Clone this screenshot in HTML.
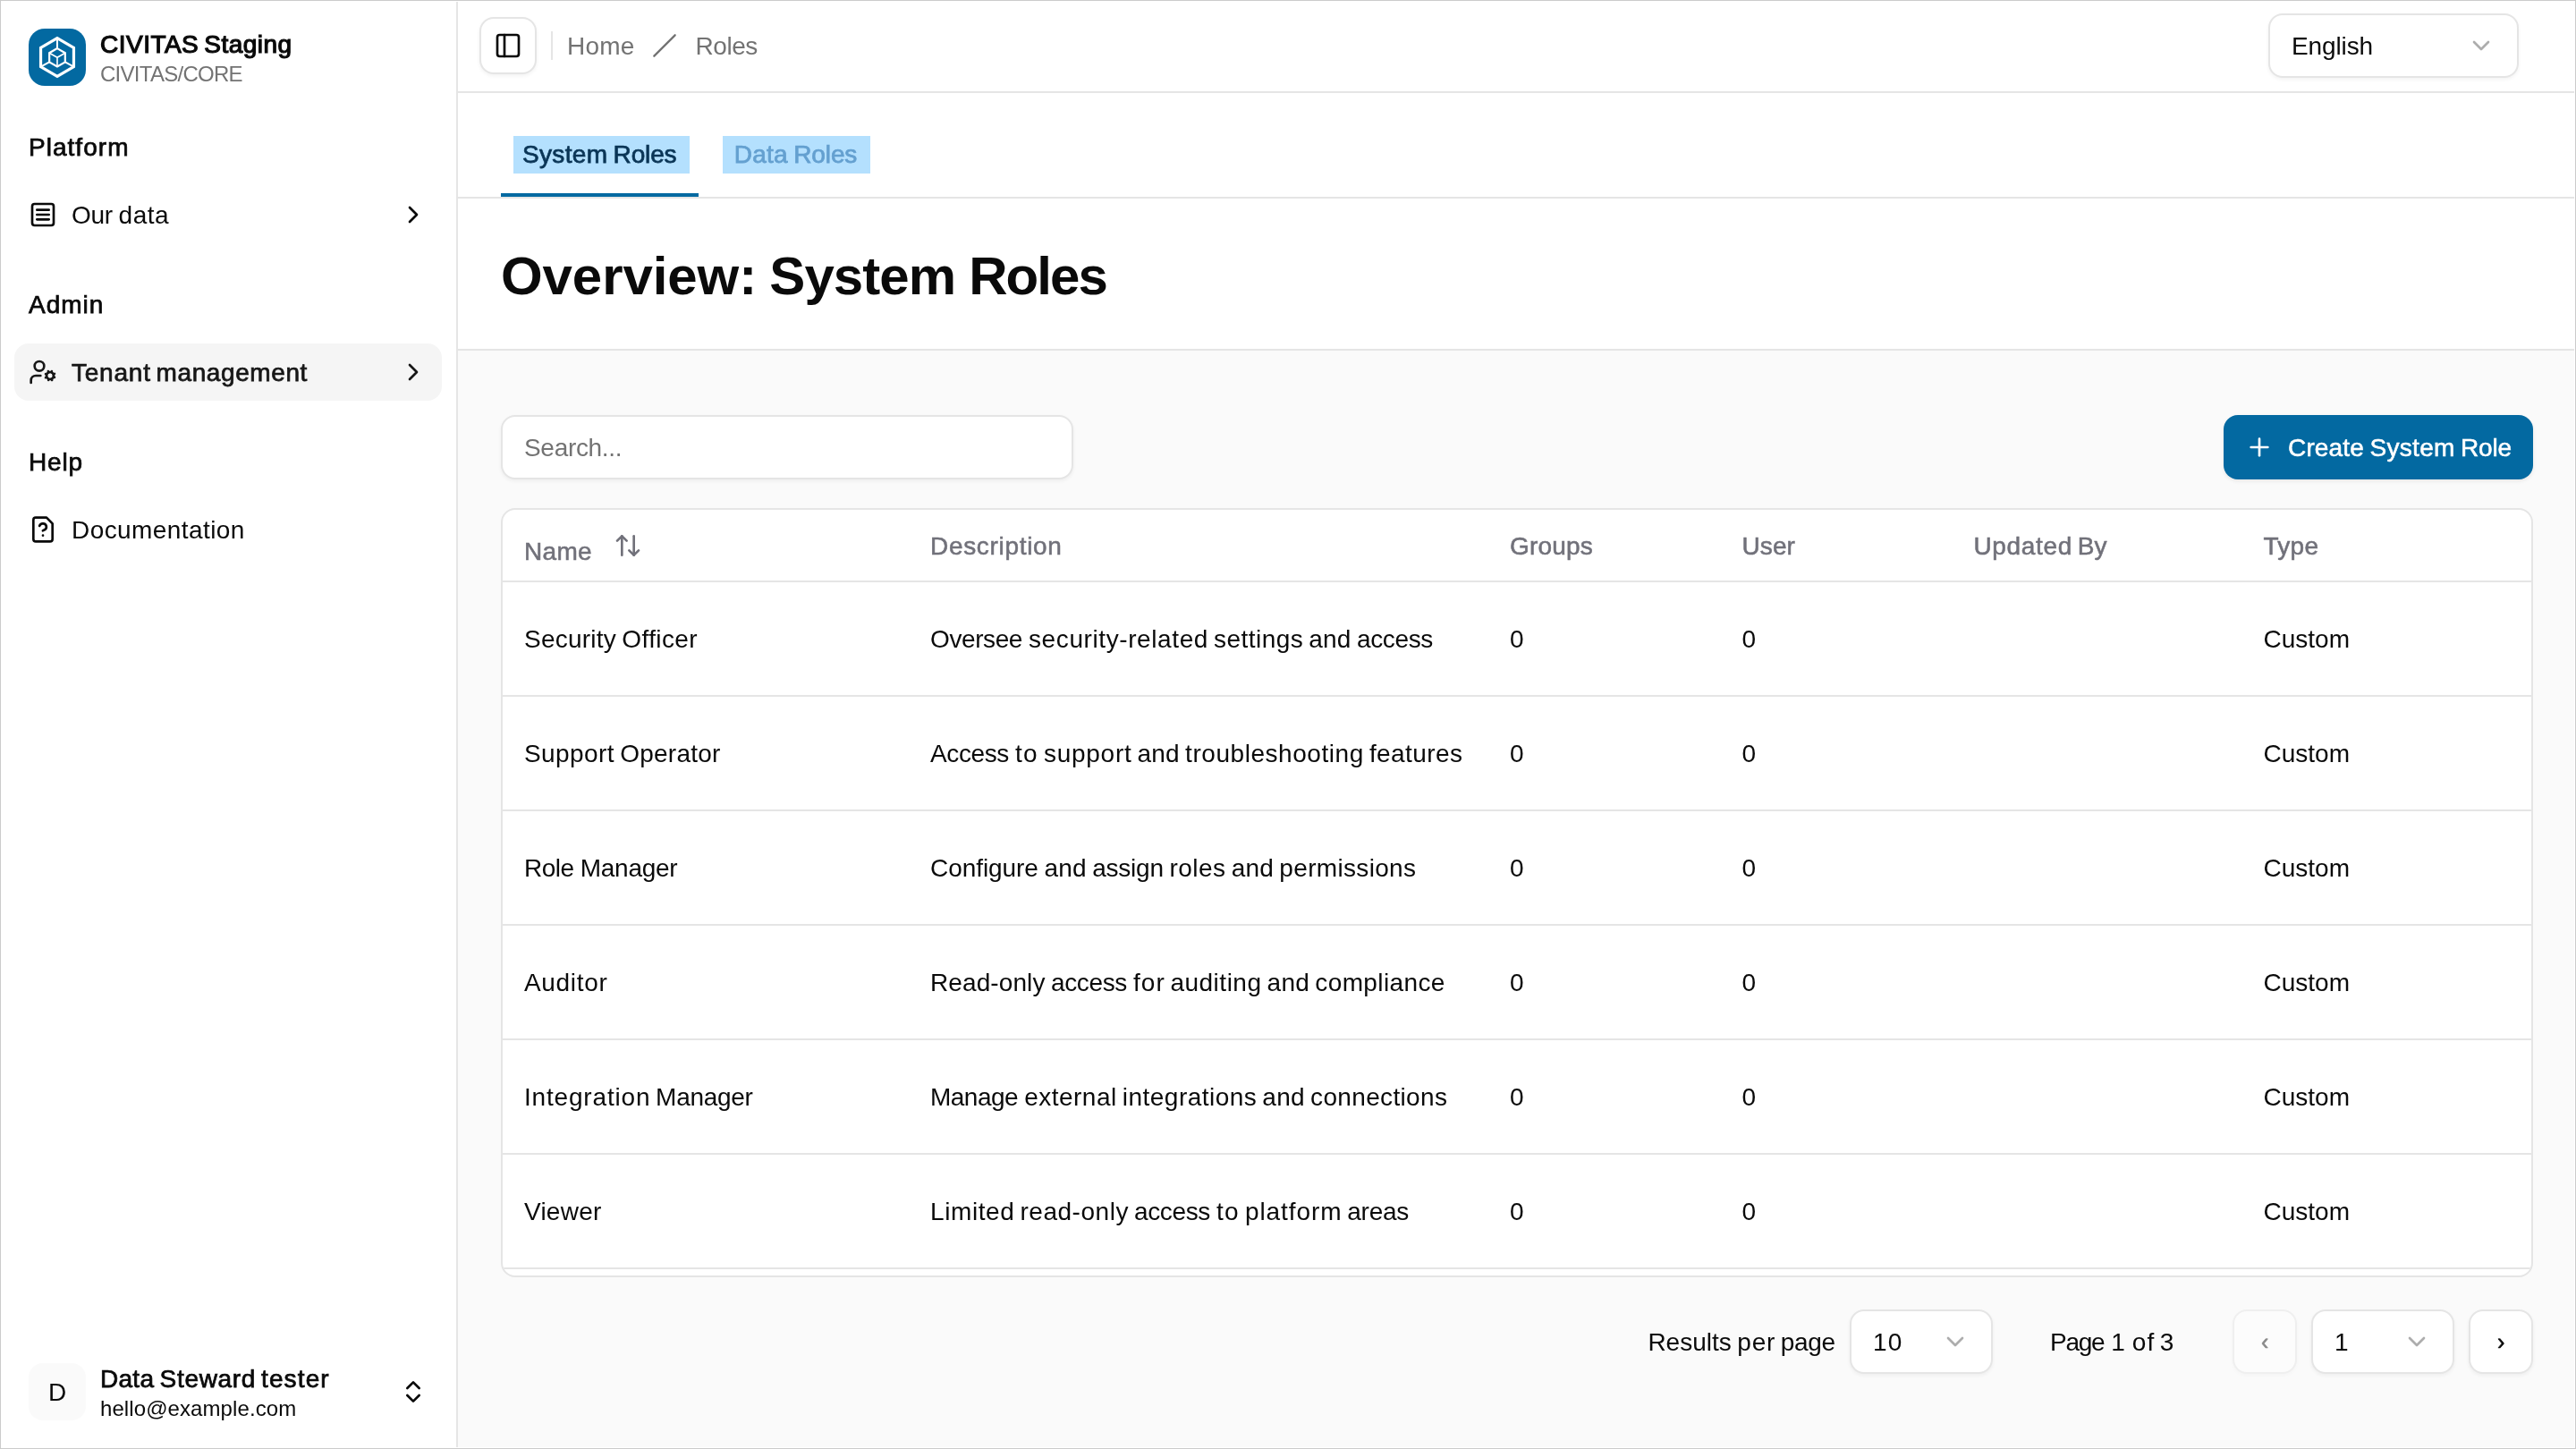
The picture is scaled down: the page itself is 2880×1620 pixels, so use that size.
<!DOCTYPE html>
<html lang="en"><head><meta charset="utf-8"><title>Overview: System Roles</title>
<style>html{font-size:calc(100vw / 28.8)}
*{box-sizing:border-box;margin:0;padding:0}
html,body{width:28.8rem;height:16.2rem;overflow:hidden;background:#fff}
body{font-family:"Liberation Sans", sans-serif;color:#0a0a0a;position:relative;will-change:transform}
.t{position:absolute;white-space:pre;line-height:1;display:block}
.w{display:inline-block;white-space:pre}
.m{-webkit-text-stroke:0.0075rem currentColor}
.sb{-webkit-text-stroke:0.012rem currentColor}
.mh{-webkit-text-stroke:0.0055rem currentColor}
.mw{-webkit-text-stroke:0.0055rem #fff}
.ic{position:absolute;display:block;overflow:visible}
.sidebar{position:absolute;left:0;top:0;width:5.12rem;height:16.2rem;background:#fff;border-right:0.02rem solid #e5e5e5}
.logo{position:absolute;left:0.32rem;top:0.32rem;width:0.64rem;height:0.64rem;border-radius:0.18rem;background:#0369a1}
.active{position:absolute;left:0.16rem;top:3.84rem;width:4.78rem;height:0.64rem;border-radius:0.16rem;background:#f5f5f5}
.avatar{position:absolute;left:0.32rem;top:15.24rem;width:0.64rem;height:0.64rem;border-radius:0.16rem;background:#fafafa}
.topbar{position:absolute;left:5.12rem;top:0;width:23.68rem;height:1.04rem;background:#fff;border-bottom:0.02rem solid #e5e5e5}
.topbar>*,.tabs>*,.titlebar>*,.content>*,.table>*{}
.btn-ghost,.select,.input{position:absolute;background:#fff;border:0.02rem solid #e5e5e5;border-radius:0.16rem;box-shadow:0 0.02rem 0.04rem rgba(0,0,0,.05)}
.select.dis{background:#fcfcfc;border-color:#efefef;box-shadow:0 0.02rem 0.04rem rgba(0,0,0,.025)}
.vsep{position:absolute;left:6.16rem;top:0.35rem;width:0.02rem;height:0.32rem;background:#e5e5e5}
.tabs{position:absolute;left:5.12rem;top:1.04rem;width:23.68rem;height:1.18rem;background:#fff;border-bottom:0.02rem solid #e5e5e5}
.chip{position:absolute;top:1.52rem;height:0.42rem;background:#b4e0fe}
.tab-underline{position:absolute;left:5.6rem;top:2.16rem;width:2.21rem;height:0.04rem;background:#0369a1}
.titlebar{position:absolute;left:5.12rem;top:2.22rem;width:23.68rem;height:1.7rem;background:#fff;border-bottom:0.02rem solid #e5e5e5}
.content{position:absolute;left:5.12rem;top:3.92rem;width:23.68rem;height:12.28rem;background:#fafafa}
.btn-primary{position:absolute;background:#0369a1;border-radius:0.16rem;box-shadow:0 0.02rem 0.04rem rgba(0,0,0,.08)}
.table{position:absolute;left:5.6rem;top:5.68rem;width:22.72rem;height:8.6rem;background:#fff;border:0.02rem solid #e5e5e5;border-radius:0.16rem;overflow:hidden}
.hr{position:absolute;left:0;width:22.68rem;height:0.02rem;background:#e5e5e5}
.frame{position:absolute;left:0;top:0;width:28.8rem;height:16.2rem;box-shadow:inset 0 0 0 0.01rem #cbcbcb,inset 0 0 0 0.02rem #fff;pointer-events:none}
.topbar>*,.tabs>*,.titlebar>*,.content>*,.table>*{}
</style></head>
<body>
<aside>
<div class="sidebar"></div>
<div class="logo"><svg class="ic" style="left:0;top:0;width:0.64rem;height:0.64rem" viewBox="0 0 64 64" fill="none" stroke="#fff" stroke-linejoin="miter"><polygon points="32.00,10.70 50.45,21.35 50.45,42.65 32.00,53.30 13.55,42.65 13.55,21.35" stroke-width="3.2"/><polygon points="32.00,22.10 40.83,27.20 40.83,37.40 32.00,42.50 23.17,37.40 23.17,27.20" stroke-width="2.2"/><path stroke-width="1.6" d="M32.00 32.30L23.17 27.20M32.00 32.30L40.83 27.20M32.00 32.30L32.00 42.50"/><path stroke-width="2" d="M32.00 10.70L32.00 22.10M13.55 42.65L23.17 37.40M50.45 42.65L40.83 37.40"/></svg></div>
<span class="t sb" style="left:1.12rem;top:0.357rem;font-size:0.28rem;"><span class="w" style="width:1.1634rem;letter-spacing:0.00484rem;">CIVITAS </span><span style="letter-spacing:0.00477rem;">Staging</span></span>
<span class="t" style="left:1.12rem;top:0.708rem;font-size:0.24rem;color:#737373;letter-spacing:-0.00727rem;">CIVITAS/CORE</span>
<nav>
<span class="t m" style="left:0.32rem;top:1.51rem;font-size:0.28rem;letter-spacing:0.01031rem;">Platform</span>
<svg class="ic" style="left:0.32rem;top:2.24rem;width:0.32rem;height:0.32rem;" viewBox="0 0 24 24" fill="none" stroke="#0a0a0a" stroke-width="2" stroke-linecap="round" stroke-linejoin="round"><rect width="18" height="18" x="3" y="3" rx="2"/><path d="M7 8h10"/><path d="M7 12h10"/><path d="M7 16h10"/></svg>
<span class="t" style="left:0.8rem;top:2.27rem;font-size:0.28rem;"><span class="w" style="width:0.5262rem;letter-spacing:-0.00336rem;">Our </span><span style="letter-spacing:0.00495rem;">data</span></span>
<svg class="ic" style="left:4.46rem;top:2.24rem;width:0.32rem;height:0.32rem;" viewBox="0 0 24 24" fill="none" stroke="#0a0a0a" stroke-width="2" stroke-linecap="round" stroke-linejoin="round"><path d="m9 18 6-6-6-6"/></svg>
<span class="t m" style="left:0.32rem;top:3.27rem;font-size:0.28rem;letter-spacing:0.01012rem;">Admin</span>
<div class="active"></div>
<svg class="ic" style="left:0.32rem;top:4rem;width:0.32rem;height:0.32rem;" viewBox="0 0 24 24" fill="none" stroke="#171717" stroke-width="2" stroke-linecap="round" stroke-linejoin="round"><circle cx="18" cy="15" r="3"/><circle cx="9" cy="7" r="4"/><path d="M10 15H6a4 4 0 0 0-4 4v2"/><path d="m21.7 16.4-.9-.3"/><path d="m15.2 13.9-.9-.3"/><path d="m16.6 18.7.3-.9"/><path d="m19.1 12.2.3-.9"/><path d="m19.6 18.7-.4-1"/><path d="m16.8 12.3-.4-1"/><path d="m14.3 16.6 1-.4"/><path d="m20.7 13.8 1-.4"/></svg>
<span class="t m" style="left:0.8rem;top:4.03rem;font-size:0.28rem;color:#171717;"><span class="w" style="width:0.9456rem;letter-spacing:0.00775rem;">Tenant </span><span style="letter-spacing:0.00599rem;">management</span></span>
<svg class="ic" style="left:4.46rem;top:4rem;width:0.32rem;height:0.32rem;" viewBox="0 0 24 24" fill="none" stroke="#171717" stroke-width="2" stroke-linecap="round" stroke-linejoin="round"><path d="m9 18 6-6-6-6"/></svg>
<span class="t m" style="left:0.32rem;top:5.03rem;font-size:0.28rem;letter-spacing:0.00833rem;">Help</span>
<svg class="ic" style="left:0.32rem;top:5.76rem;width:0.32rem;height:0.32rem;" viewBox="0 0 24 24" fill="none" stroke="#0a0a0a" stroke-width="2" stroke-linecap="round" stroke-linejoin="round"><path d="M12 17h.01"/><path d="M15 2H6a2 2 0 0 0-2 2v16a2 2 0 0 0 2 2h12a2 2 0 0 0 2-2V7z"/><path d="M9.1 9a3 3 0 0 1 5.82 1c0 2-3 3-3 3"/></svg>
<span class="t" style="left:0.8rem;top:5.79rem;font-size:0.28rem;letter-spacing:0.00419rem;">Documentation</span>
</nav>
<div class="avatar"></div>
<span class="t" style="left:0.54rem;top:15.426rem;font-size:0.28rem;">D</span>
<span class="t m" style="left:1.12rem;top:15.28rem;font-size:0.28rem;"><span class="w" style="width:0.6661rem;letter-spacing:0.00281rem;">Data </span><span class="w" style="width:1.1341rem;letter-spacing:0.00682rem;">Steward </span><span style="letter-spacing:0.01125rem;">tester</span></span>
<span class="t" style="left:1.12rem;top:15.63rem;font-size:0.24rem;letter-spacing:0.00085rem;">hello@example.com</span>
<svg class="ic" style="left:4.46rem;top:15.4rem;width:0.32rem;height:0.32rem;" viewBox="0 0 24 24" fill="none" stroke="#0a0a0a" stroke-width="2" stroke-linecap="round" stroke-linejoin="round"><path d="m7 15 5 5 5-5"/><path d="m7 9 5-5 5 5"/></svg>
</aside>
<header>
<div class="topbar"></div>
<div class="btn-ghost" style="left:5.36rem;top:0.19rem;width:0.64rem;height:0.64rem"></div>
<svg class="ic" style="left:5.52rem;top:0.35rem;width:0.32rem;height:0.32rem;" viewBox="0 0 24 24" fill="none" stroke="#0a0a0a" stroke-width="2" stroke-linecap="round" stroke-linejoin="round"><rect width="18" height="18" x="3" y="3" rx="2"/><path d="M9 3v18"/></svg>
<div class="vsep"></div>
<span class="t" style="left:6.34rem;top:0.38rem;font-size:0.28rem;color:#737373;letter-spacing:0.00198rem;">Home</span>
<svg class="ic" style="left:7.293rem;top:0.37rem;width:0.28rem;height:0.28rem;" viewBox="0 0 24 24" fill="none" stroke="#737373" stroke-width="2" stroke-linecap="round" stroke-linejoin="round"><path d="M22 2 2 22"/></svg>
<span class="t" style="left:7.775rem;top:0.38rem;font-size:0.28rem;color:#737373;letter-spacing:-0.00445rem;">Roles</span>
<div class="select" style="left:25.36rem;top:0.15rem;width:2.8rem;height:0.72rem"></div>
<span class="t" style="left:25.62rem;top:0.38rem;font-size:0.28rem;letter-spacing:-0.00112rem;">English</span>
<svg class="ic" style="left:27.58rem;top:0.35rem;width:0.32rem;height:0.32rem;" viewBox="0 0 24 24" fill="none" stroke="#adadad" stroke-width="2" stroke-linecap="round" stroke-linejoin="round"><path d="m6 9 6 6 6-6"/></svg>
</header>
<section>
<div class="tabs"></div>
<div class="chip" style="left:5.74rem;width:1.97rem"></div>
<span class="t m" style="left:5.84rem;top:1.59rem;font-size:0.28rem;color:#0a3556;"><span class="w" style="width:1.0158rem;letter-spacing:0.00322rem;">System </span><span style="letter-spacing:-0.00145rem;">Roles</span></span>
<div class="tab-underline"></div>
<div class="chip" style="left:8.08rem;width:1.65rem"></div>
<span class="t m" style="left:8.207rem;top:1.59rem;font-size:0.28rem;color:#64a0d0;"><span class="w" style="width:0.6661rem;letter-spacing:0.00281rem;">Data </span><span style="letter-spacing:-0.00145rem;">Roles</span></span>
</section>
<section>
<div class="titlebar"></div>
<span class="t" style="left:5.6rem;top:2.79rem;font-size:0.6rem;font-weight:700;"><span class="w" style="width:3.0031rem;letter-spacing:-0.00086rem;">Overview: </span><span class="w" style="width:2.2295rem;letter-spacing:-0.00931rem;">System </span><span style="letter-spacing:-0.01965rem;">Roles</span></span>
</section>
<section>
<div class="content"></div>
<div class="input" style="left:5.6rem;top:4.64rem;width:6.4rem;height:0.72rem"></div>
<span class="t" style="left:5.86rem;top:4.874rem;font-size:0.28rem;color:#737373;letter-spacing:-0.00311rem;">Search...</span>
<div class="btn-primary" style="left:24.86rem;top:4.64rem;width:3.46rem;height:0.72rem"></div>
<svg class="ic" style="left:25.1rem;top:4.84rem;width:0.32rem;height:0.32rem;" viewBox="0 0 24 24" fill="none" stroke="#fff" stroke-width="2" stroke-linecap="round" stroke-linejoin="round"><path d="M5 12h14"/><path d="M12 5v14"/></svg>
<span class="t mw" style="left:25.58rem;top:4.87rem;font-size:0.28rem;color:#fff;"><span class="w" style="width:0.9144rem;letter-spacing:0.00156rem;">Create </span><span class="w" style="width:1.0158rem;letter-spacing:0.00322rem;">System </span><span style="letter-spacing:-0.00135rem;">Role</span></span>
<div>
<div class="table"><div class="hr" style="top:0.79rem"></div><div class="hr" style="top:2.07rem"></div><div class="hr" style="top:3.35rem"></div><div class="hr" style="top:4.63rem"></div><div class="hr" style="top:5.91rem"></div><div class="hr" style="top:7.19rem"></div><div class="hr" style="top:8.47rem"></div></div>
<span class="t mh" style="left:5.86rem;top:6.03rem;font-size:0.28rem;color:#71717a;letter-spacing:0.00302rem;">Name</span>
<svg class="ic" style="left:6.86rem;top:5.94rem;width:0.32rem;height:0.32rem;" viewBox="0 0 24 24" fill="none" stroke="#71717a" stroke-width="2" stroke-linecap="round" stroke-linejoin="round"><path d="m21 16-4 4-4-4"/><path d="M17 20V4"/><path d="m3 8 4-4 4 4"/><path d="M7 4v16"/></svg>
<span class="t mh" style="left:10.4rem;top:5.97rem;font-size:0.28rem;color:#71717a;letter-spacing:0.00683rem;">Description</span>
<span class="t mh" style="left:16.88rem;top:5.97rem;font-size:0.28rem;color:#71717a;letter-spacing:0.00178rem;">Groups</span>
<span class="t mh" style="left:19.476rem;top:5.97rem;font-size:0.28rem;color:#71717a;letter-spacing:0.00052rem;">User</span>
<span class="t mh" style="left:22.064rem;top:5.97rem;font-size:0.28rem;color:#71717a;"><span class="w" style="width:1.1647rem;letter-spacing:0.00664rem;">Updated </span><span style="letter-spacing:-0.00094rem;">By</span></span>
<span class="t mh" style="left:25.304rem;top:5.97rem;font-size:0.28rem;color:#71717a;letter-spacing:0.00323rem;">Type</span>
<span class="t" style="left:5.86rem;top:7.01rem;font-size:0.28rem;"><span class="w" style="width:1.0931rem;letter-spacing:0.00223rem;">Security </span><span style="letter-spacing:0.00398rem;">Officer</span></span>
<span class="t" style="left:10.4rem;top:7.01rem;font-size:0.28rem;"><span class="w" style="width:1.1002rem;letter-spacing:-0.00404rem;">Oversee </span><span class="w" style="width:2.0698rem;letter-spacing:0.00598rem;">security-related </span><span class="w" style="width:1.0634rem;letter-spacing:0.00464rem;">settings </span><span class="w" style="width:0.537rem;letter-spacing:0.00195rem;">and </span><span style="letter-spacing:-0.00378rem;">access</span></span>
<span class="t" style="left:16.88rem;top:7.01rem;font-size:0.28rem;">0</span>
<span class="t" style="left:19.476rem;top:7.01rem;font-size:0.28rem;">0</span>
<span class="t" style="left:25.304rem;top:7.01rem;font-size:0.28rem;letter-spacing:0.00022rem;">Custom</span>
<span class="t" style="left:5.86rem;top:8.29rem;font-size:0.28rem;"><span class="w" style="width:1.0717rem;letter-spacing:0.00414rem;">Support </span><span style="letter-spacing:0.00248rem;">Operator</span></span>
<span class="t" style="left:10.4rem;top:8.29rem;font-size:0.28rem;"><span class="w" style="width:0.9488rem;letter-spacing:-0.00397rem;">Access </span><span class="w" style="width:0.32rem;letter-spacing:0.013rem;">to </span><span class="w" style="width:1.0453rem;letter-spacing:0.00753rem;">support </span><span class="w" style="width:0.537rem;letter-spacing:0.00195rem;">and </span><span class="w" style="width:2.058rem;letter-spacing:0.00551rem;">troubleshooting </span><span style="letter-spacing:0.00429rem;">features</span></span>
<span class="t" style="left:16.88rem;top:8.29rem;font-size:0.28rem;">0</span>
<span class="t" style="left:19.476rem;top:8.29rem;font-size:0.28rem;">0</span>
<span class="t" style="left:25.304rem;top:8.29rem;font-size:0.28rem;letter-spacing:0.00022rem;">Custom</span>
<span class="t" style="left:5.86rem;top:9.57rem;font-size:0.28rem;"><span class="w" style="width:0.6278rem;letter-spacing:-0.00474rem;">Role </span><span style="letter-spacing:-0.00284rem;">Manager</span></span>
<span class="t" style="left:10.4rem;top:9.57rem;font-size:0.28rem;"><span class="w" style="width:1.2755rem;letter-spacing:-0.00059rem;">Configure </span><span class="w" style="width:0.537rem;letter-spacing:0.00195rem;">and </span><span class="w" style="width:0.8636rem;letter-spacing:-0.00237rem;">assign </span><span class="w" style="width:0.6905rem;letter-spacing:0.00438rem;">roles </span><span class="w" style="width:0.537rem;letter-spacing:0.00195rem;">and </span><span style="letter-spacing:0.00328rem;">permissions</span></span>
<span class="t" style="left:16.88rem;top:9.57rem;font-size:0.28rem;">0</span>
<span class="t" style="left:19.476rem;top:9.57rem;font-size:0.28rem;">0</span>
<span class="t" style="left:25.304rem;top:9.57rem;font-size:0.28rem;letter-spacing:0.00022rem;">Custom</span>
<span class="t" style="left:5.86rem;top:10.85rem;font-size:0.28rem;letter-spacing:0.00674rem;">Auditor</span>
<span class="t" style="left:10.4rem;top:10.85rem;font-size:0.28rem;"><span class="w" style="width:1.3503rem;letter-spacing:0.00098rem;">Read-only </span><span class="w" style="width:0.9186rem;letter-spacing:-0.00378rem;">access </span><span class="w" style="width:0.4153rem;letter-spacing:0.01117rem;">for </span><span class="w" style="width:1.0822rem;letter-spacing:0.00504rem;">auditing </span><span class="w" style="width:0.537rem;letter-spacing:0.00195rem;">and </span><span style="letter-spacing:0.00378rem;">compliance</span></span>
<span class="t" style="left:16.88rem;top:10.85rem;font-size:0.28rem;">0</span>
<span class="t" style="left:19.476rem;top:10.85rem;font-size:0.28rem;">0</span>
<span class="t" style="left:25.304rem;top:10.85rem;font-size:0.28rem;letter-spacing:0.00022rem;">Custom</span>
<span class="t" style="left:5.86rem;top:12.13rem;font-size:0.28rem;"><span class="w" style="width:1.4712rem;letter-spacing:0.00819rem;">Integration </span><span style="letter-spacing:-0.00284rem;">Manager</span></span>
<span class="t" style="left:10.4rem;top:12.13rem;font-size:0.28rem;"><span class="w" style="width:1.0514rem;letter-spacing:-0.00528rem;">Manage </span><span class="w" style="width:1.0969rem;letter-spacing:0.00493rem;">external </span><span class="w" style="width:1.5655rem;letter-spacing:0.00472rem;">integrations </span><span class="w" style="width:0.537rem;letter-spacing:0.00195rem;">and </span><span style="letter-spacing:0.00348rem;">connections</span></span>
<span class="t" style="left:16.88rem;top:12.13rem;font-size:0.28rem;">0</span>
<span class="t" style="left:19.476rem;top:12.13rem;font-size:0.28rem;">0</span>
<span class="t" style="left:25.304rem;top:12.13rem;font-size:0.28rem;letter-spacing:0.00022rem;">Custom</span>
<span class="t" style="left:5.86rem;top:13.41rem;font-size:0.28rem;letter-spacing:0.00241rem;">Viewer</span>
<span class="t" style="left:10.4rem;top:13.41rem;font-size:0.28rem;"><span class="w" style="width:1.0042rem;letter-spacing:0.00591rem;">Limited </span><span class="w" style="width:1.2764rem;letter-spacing:0.00539rem;">read-only </span><span class="w" style="width:0.9188rem;letter-spacing:-0.00378rem;">access </span><span class="w" style="width:0.32rem;letter-spacing:0.013rem;">to </span><span class="w" style="width:1.1433rem;letter-spacing:0.00938rem;">platform </span><span style="letter-spacing:-0.00246rem;">areas</span></span>
<span class="t" style="left:16.88rem;top:13.41rem;font-size:0.28rem;">0</span>
<span class="t" style="left:19.476rem;top:13.41rem;font-size:0.28rem;">0</span>
<span class="t" style="left:25.304rem;top:13.41rem;font-size:0.28rem;letter-spacing:0.00022rem;">Custom</span>
</div>
<span class="t" style="left:18.424rem;top:14.87rem;font-size:0.28rem;"><span class="w" style="width:0.9997rem;">Results </span><span class="w" style="width:0.485rem;letter-spacing:0.00711rem;">per </span><span style="letter-spacing:-0.0037rem;">page</span></span>
<div class="select" style="left:20.68rem;top:14.64rem;width:1.6rem;height:0.72rem"></div>
<span class="t" style="left:20.94rem;top:14.87rem;font-size:0.28rem;letter-spacing:0.013rem;">10</span>
<svg class="ic" style="left:21.7rem;top:14.84rem;width:0.32rem;height:0.32rem;" viewBox="0 0 24 24" fill="none" stroke="#adadad" stroke-width="2" stroke-linecap="round" stroke-linejoin="round"><path d="m6 9 6 6 6-6"/></svg>
<span class="t" style="left:22.92rem;top:14.87rem;font-size:0.28rem;"><span class="w" style="width:0.6825rem;letter-spacing:-0.01255rem;">Page </span><span class="w" style="width:0.2341rem;">1 </span><span class="w" style="width:0.3119rem;letter-spacing:0.01234rem;">of </span>3</span>
<div class="select dis" style="left:24.96rem;top:14.64rem;width:0.72rem;height:0.72rem"></div>
<span class="t mh" style="left:25.28rem;top:14.88rem;font-size:0.25rem;color:#8a8a8a;">‹</span>
<div class="select" style="left:25.84rem;top:14.64rem;width:1.6rem;height:0.72rem"></div>
<span class="t" style="left:26.1rem;top:14.87rem;font-size:0.28rem;">1</span>
<svg class="ic" style="left:26.86rem;top:14.84rem;width:0.32rem;height:0.32rem;" viewBox="0 0 24 24" fill="none" stroke="#adadad" stroke-width="2" stroke-linecap="round" stroke-linejoin="round"><path d="m6 9 6 6 6-6"/></svg>
<div class="select" style="left:27.6rem;top:14.64rem;width:0.72rem;height:0.72rem"></div>
<span class="t mh" style="left:27.92rem;top:14.88rem;font-size:0.25rem;">›</span>
</section>
<div class="frame"></div>
</body></html>
